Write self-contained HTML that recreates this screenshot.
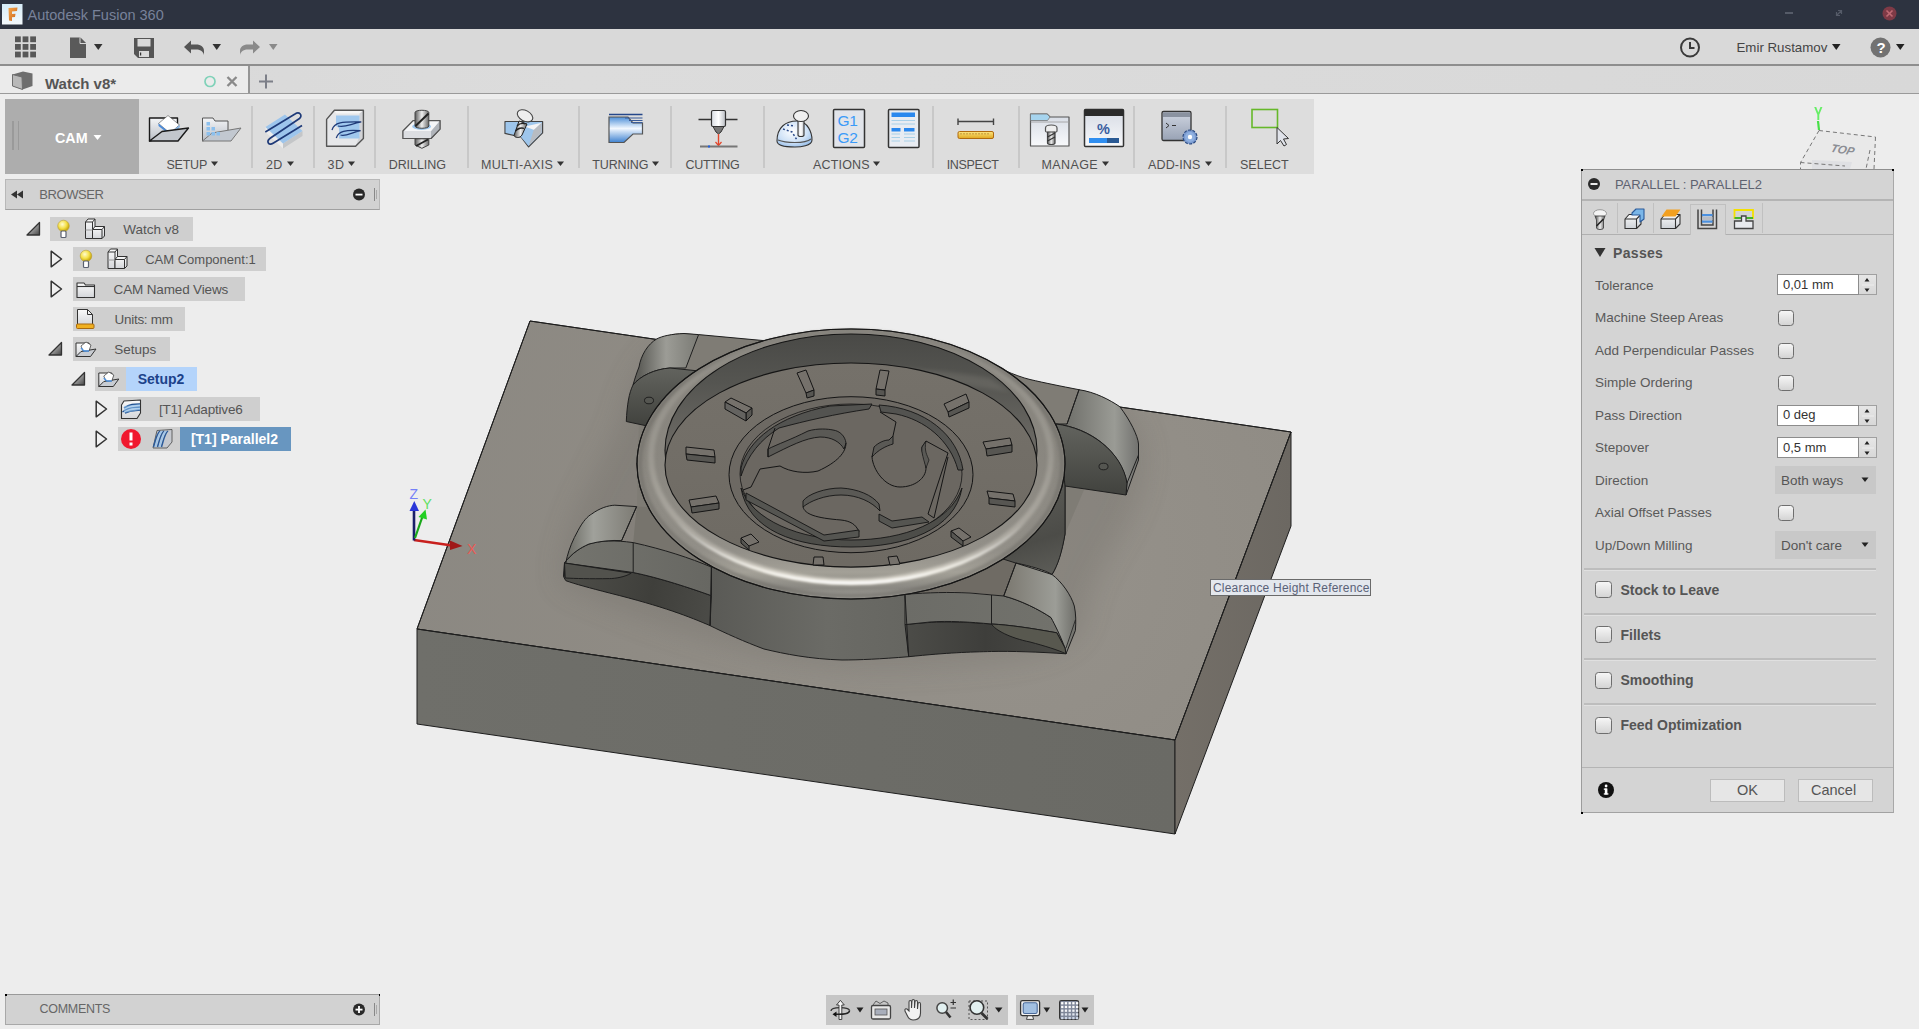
<!DOCTYPE html>
<html><head><meta charset="utf-8">
<style>
*{margin:0;padding:0;box-sizing:border-box}
html,body{width:1919px;height:1029px;overflow:hidden;background:#ededed;font-family:"Liberation Sans",sans-serif;color:#444}
.a{position:absolute}
.t{position:absolute;white-space:nowrap;line-height:1}
svg.a{overflow:visible}
</style></head><body>
<div class="a" style="left:0;top:0;width:1919px;height:29px;background:#2d3340"></div>
<svg class="a" style="left:2px;top:4px" width="21" height="21" viewBox="0 0 21 21">
<defs><linearGradient id="fi" x1="0" y1="0" x2="0" y2="1"><stop offset="0" stop-color="#d6ecf8"/><stop offset="1" stop-color="#f4f9fc"/></linearGradient>
<linearGradient id="fo" x1="0" y1="0" x2="1" y2="1"><stop offset="0" stop-color="#f6a64a"/><stop offset="1" stop-color="#c8641c"/></linearGradient></defs>
<rect x="0" y="0" width="20.5" height="20.5" fill="url(#fi)"/>
<path d="M6.5,4 L15.5,3.5 L15,7 L10,7.5 L10,10 L13.5,9.8 L13,13 L10,13.2 L10,17 L7,16.5 Z" fill="url(#fo)"/>
</svg>
<div class="t" style="left:27.5px;top:7.73px;font-size:14.5px;color:#78829a;font-weight:normal;">Autodesk Fusion 360</div>

<div class="a" style="left:1785px;top:12px;width:8px;height:1.5px;background:#555b68"></div>
<svg class="a" style="left:1834px;top:8px" width="10" height="10"><path d="M3,7 L7,3 M4,2.5 L7.5,2.5 L7.5,6 M2.5,4 L2.5,7.5 L6,7.5" stroke="#555b68" stroke-width="1.2" fill="none"/></svg>
<svg class="a" style="left:1882px;top:6px" width="15" height="15"><circle cx="7.5" cy="7.5" r="7" fill="#7e3a46"/><path d="M4.5,4.5 L10.5,10.5 M10.5,4.5 L4.5,10.5" stroke="#c06a74" stroke-width="1.6"/></svg>
<div class="a" style="left:0;top:29px;width:1919px;height:35px;background:#d9d9d9"></div>
<div class="a" style="left:0;top:64px;width:1919px;height:2px;background:#8e8e8e"></div>
<svg class="a" style="left:0;top:0" width="300" height="66"><rect x="15.0" y="36.4" width="5.8" height="5.8" fill="#585858"/><rect x="22.6" y="36.4" width="5.8" height="5.8" fill="#585858"/><rect x="30.2" y="36.4" width="5.8" height="5.8" fill="#585858"/><rect x="15.0" y="44.0" width="5.8" height="5.8" fill="#585858"/><rect x="22.6" y="44.0" width="5.8" height="5.8" fill="#585858"/><rect x="30.2" y="44.0" width="5.8" height="5.8" fill="#585858"/><rect x="15.0" y="51.6" width="5.8" height="5.8" fill="#585858"/><rect x="22.6" y="51.6" width="5.8" height="5.8" fill="#585858"/><rect x="30.2" y="51.6" width="5.8" height="5.8" fill="#585858"/><path d="M70,37.5 L80,37.5 L86,43.5 L86,58 L70,58 Z" fill="#5a5a5a"/><path d="M80,37.5 L80,43.5 L86,43.5" fill="#d9d9d9" stroke="#d9d9d9" stroke-width="1"/><path d="M80.5,37.5 L86,43 L80.5,43 Z" fill="#5a5a5a"/><path d="M94,44 L102.5,44 L98.25,50 Z" fill="#333"/><path d="M134,38 L154,38 L154,58 L138,58 L134,54 Z" fill="#555"/><rect x="137.5" y="39" width="13" height="7.5" fill="#d9d9d9"/><rect x="139" y="51" width="10" height="6" fill="#d9d9d9"/><rect x="140" y="52.5" width="1.2" height="3" fill="#333"/><path d="M184,47 L191,40.5 L191,44.5 L196,44.5 C201,44.5 204,47 204,51 L204,55 C203,51 200,49.5 196,49.5 L191,49.5 L191,53.5 Z" fill="#555"/><path d="M212.5,44 L221,44 L216.75,50 Z" fill="#333"/><path d="M260,47 L253,40.5 L253,44.5 L248,44.5 C243,44.5 240,47 240,51 L240,55 C241,51 244,49.5 248,49.5 L253,49.5 L253,53.5 Z" fill="#8a8a8a"/><path d="M269,44 L277.5,44 L273.25,50 Z" fill="#8a8a8a"/></svg>
<svg class="a" style="left:1676px;top:33px" width="30" height="30"><circle cx="14" cy="14.5" r="9" fill="none" stroke="#3a3a3a" stroke-width="2"/><path d="M14,9 L14,15 L18.5,15" fill="none" stroke="#3a3a3a" stroke-width="2"/></svg>
<div class="t" style="left:1736.5px;top:41.44px;font-size:13.3px;color:#444;font-weight:normal;">Emir Rustamov</div>

<svg class="a" style="left:1828px;top:40px" width="80" height="20"><path d="M4,4 L12.5,4 L8.25,10 Z" fill="#222"/><circle cx="52.5" cy="7.5" r="10" fill="#727272"/><path d="M68,4 L76.5,4 L72.25,10 Z" fill="#222"/></svg>
<div class="t" style="left:1876.5px;top:40.30px;font-size:15px;color:#fff;font-weight:bold;">?</div>

<div class="a" style="left:0;top:66px;width:1919px;height:27px;background:linear-gradient(90deg,#d8d8d8,#dcdcdc 30%,#d8d8d8)"></div>
<div class="a" style="left:0;top:66px;width:248px;height:27px;background:#ebebeb"></div>
<div class="a" style="left:248px;top:66px;width:2px;height:27px;background:#959595"></div>
<div class="a" style="left:0;top:93px;width:1919px;height:1px;background:#9a9a9a"></div>
<svg class="a" style="left:0;top:66px" width="300" height="27"><path d="M12.5,8.5 L23,5.5 L32.5,7.5 L32.5,20 L22.5,23.5 L12.5,20 Z" fill="#6e6e6e"/><path d="M12.5,8.5 L22,11 L22.5,23.5 L12.5,20 Z" fill="#b9b9b9" stroke="#6e6e6e" stroke-width="1"/><circle cx="210" cy="15.5" r="5" fill="none" stroke="#80d2b9" stroke-width="1.7"/><path d="M227.5,11 L236.5,20 M236.5,11 L227.5,20" stroke="#8a8a8a" stroke-width="2.4"/><path d="M259,15.5 L273,15.5 M266,8.5 L266,22.5" stroke="#7c7f88" stroke-width="2"/></svg>
<div class="t" style="left:45px;top:75.70px;font-size:15px;color:#555;font-weight:bold;">Watch v8*</div>

<div class="a" style="left:5px;top:99px;width:1309px;height:75px;background:#dddddd"></div>
<div class="a" style="left:5px;top:99px;width:134px;height:75px;background:#adadad"></div>
<div class="a" style="left:12px;top:121px;width:1.5px;height:29px;background:#9a9a9a"></div>
<div class="a" style="left:17.5px;top:121px;width:1.5px;height:29px;background:#9a9a9a"></div>
<div class="t" style="left:55px;top:130.90px;font-size:14.3px;color:#fff;font-weight:bold;">CAM</div>

<svg class="a" style="left:93px;top:134px" width="10" height="8"><path d="M0.5,1 L8.5,1 L4.5,6 Z" fill="#fff"/></svg>
<div class="a" style="left:251.4px;top:106px;width:2px;height:62px;background:#c8c8c8"></div>
<div class="a" style="left:312.6px;top:106px;width:2px;height:62px;background:#c8c8c8"></div>
<div class="a" style="left:373.5px;top:106px;width:2px;height:62px;background:#c8c8c8"></div>
<div class="a" style="left:466.5px;top:106px;width:2px;height:62px;background:#c8c8c8"></div>
<div class="a" style="left:577.7px;top:106px;width:2px;height:62px;background:#c8c8c8"></div>
<div class="a" style="left:670.4px;top:106px;width:2px;height:62px;background:#c8c8c8"></div>
<div class="a" style="left:762.7px;top:106px;width:2px;height:62px;background:#c8c8c8"></div>
<div class="a" style="left:931.6px;top:106px;width:2px;height:62px;background:#c8c8c8"></div>
<div class="a" style="left:1018.0px;top:106px;width:2px;height:62px;background:#c8c8c8"></div>
<div class="a" style="left:1133.0px;top:106px;width:2px;height:62px;background:#c8c8c8"></div>
<div class="a" style="left:1225.0px;top:106px;width:2px;height:62px;background:#c8c8c8"></div>
<div class="t" style="left:166.5px;top:159.42px;font-size:12.5px;color:#505050;font-weight:normal;letter-spacing:-0.24px">SETUP</div>

<svg class="a" style="left:211px;top:161px" width="9" height="7"><path d="M0,0.5 L7,0.5 L3.5,5 Z" fill="#333"/></svg>
<div class="t" style="left:266px;top:159.42px;font-size:12.5px;color:#505050;font-weight:normal;letter-spacing:0.38px">2D</div>

<svg class="a" style="left:287px;top:161px" width="9" height="7"><path d="M0,0.5 L7,0.5 L3.5,5 Z" fill="#333"/></svg>
<div class="t" style="left:327.4px;top:159.42px;font-size:12.5px;color:#505050;font-weight:normal;letter-spacing:0.60px">3D</div>

<svg class="a" style="left:348px;top:161px" width="9" height="7"><path d="M0,0.5 L7,0.5 L3.5,5 Z" fill="#333"/></svg>
<div class="t" style="left:388.7px;top:159.42px;font-size:12.5px;color:#505050;font-weight:normal;letter-spacing:-0.06px">DRILLING</div>

<div class="t" style="left:481px;top:159.42px;font-size:12.5px;color:#505050;font-weight:normal;letter-spacing:0.28px">MULTI-AXIS</div>

<svg class="a" style="left:557px;top:161px" width="9" height="7"><path d="M0,0.5 L7,0.5 L3.5,5 Z" fill="#333"/></svg>
<div class="t" style="left:592.2px;top:159.42px;font-size:12.5px;color:#505050;font-weight:normal;letter-spacing:-0.11px">TURNING</div>

<svg class="a" style="left:651.6px;top:161px" width="9" height="7"><path d="M0,0.5 L7,0.5 L3.5,5 Z" fill="#333"/></svg>
<div class="t" style="left:685.4px;top:159.42px;font-size:12.5px;color:#505050;font-weight:normal;letter-spacing:-0.20px">CUTTING</div>

<div class="t" style="left:813px;top:159.42px;font-size:12.5px;color:#505050;font-weight:normal;letter-spacing:0.17px">ACTIONS</div>

<svg class="a" style="left:873px;top:161px" width="9" height="7"><path d="M0,0.5 L7,0.5 L3.5,5 Z" fill="#333"/></svg>
<div class="t" style="left:946.7px;top:159.42px;font-size:12.5px;color:#505050;font-weight:normal;letter-spacing:-0.31px">INSPECT</div>

<div class="t" style="left:1041.5px;top:159.42px;font-size:12.5px;color:#505050;font-weight:normal;letter-spacing:0.38px">MANAGE</div>

<svg class="a" style="left:1102px;top:161px" width="9" height="7"><path d="M0,0.5 L7,0.5 L3.5,5 Z" fill="#333"/></svg>
<div class="t" style="left:1148px;top:159.42px;font-size:12.5px;color:#505050;font-weight:normal;letter-spacing:0.15px">ADD-INS</div>

<svg class="a" style="left:1204.7px;top:161px" width="9" height="7"><path d="M0,0.5 L7,0.5 L3.5,5 Z" fill="#333"/></svg>
<div class="t" style="left:1240px;top:159.42px;font-size:12.5px;color:#505050;font-weight:normal;letter-spacing:0.00px">SELECT</div>

<svg class="a" style="left:0;top:0" width="1320" height="180" viewBox="0 0 1320 180">
<defs>
 <linearGradient id="iw" x1="0" y1="0" x2="0" y2="1"><stop offset="0" stop-color="#ffffff"/><stop offset="1" stop-color="#c9cdd3"/></linearGradient>
 <linearGradient id="iwh" x1="0" y1="0" x2="1" y2="0"><stop offset="0" stop-color="#d8dce2"/><stop offset="0.5" stop-color="#ffffff"/><stop offset="1" stop-color="#b8bcc2"/></linearGradient>
 <linearGradient id="ib" x1="0" y1="0" x2="0" y2="1"><stop offset="0" stop-color="#cfe6fb"/><stop offset="1" stop-color="#6fa8e0"/></linearGradient>
 <linearGradient id="ibt" x1="0" y1="0" x2="0" y2="1"><stop offset="0" stop-color="#4d8fd8"/><stop offset="0.45" stop-color="#f2f8ff"/><stop offset="1" stop-color="#3f82d0"/></linearGradient>
 <linearGradient id="ifold" x1="0" y1="0" x2="0" y2="1"><stop offset="0" stop-color="#f4f5f7"/><stop offset="1" stop-color="#b9bec6"/></linearGradient>
 <linearGradient id="idrill" x1="0" y1="0" x2="1" y2="0"><stop offset="0" stop-color="#5a5a5a"/><stop offset="0.5" stop-color="#eeeeee"/><stop offset="1" stop-color="#6a6a6a"/></linearGradient>
 <linearGradient id="iyel" x1="0" y1="0" x2="0" y2="1"><stop offset="0" stop-color="#ffe680"/><stop offset="1" stop-color="#e0a820"/></linearGradient>
 <linearGradient id="iwin" x1="0" y1="0" x2="0" y2="1"><stop offset="0" stop-color="#d6dbe4"/><stop offset="1" stop-color="#f8f9fb"/></linearGradient>
 <linearGradient id="iadd" x1="0" y1="0" x2="0" y2="1"><stop offset="0" stop-color="#d0d6e2"/><stop offset="1" stop-color="#98a2b4"/></linearGradient>
 <radialGradient id="idome" cx="0.45" cy="0.4" r="0.7"><stop offset="0" stop-color="#ffffff"/><stop offset="0.6" stop-color="#cfe2f7"/><stop offset="1" stop-color="#8fb8e6"/></radialGradient>
</defs>
<!-- SETUP 1: open folder with white box -->
<g stroke-linejoin="round">
 <path d="M149.5,118 L177.5,118 L177.5,133 L149.5,141 Z" fill="url(#ifold)" stroke="#1a1a1a" stroke-width="1.4"/>
 <path d="M158.5,123.5 L168,115.5 L179.5,125 L170,133 Z" fill="#ffffff" stroke="#555" stroke-width="0.6"/>
 <path d="M158.5,123.5 L170,133 L170,135 L158.5,126 Z" fill="#4a8ad8"/>
 <path d="M170,133 L179.5,125 L180,127 L170,135 Z" fill="#8ab8e8"/>
 <path d="M162,131.5 L188.5,128 L178,141 L149.5,141 Z" fill="#c2c6cc" stroke="#1a1a1a" stroke-width="1.4"/>
</g>
<!-- SETUP 2: folder with grid -->
<g stroke="#555" stroke-width="1" stroke-linejoin="round">
 <path d="M202.5,118 L213,118 L215,121 L228,121 L228,134 L202.5,141 Z" fill="url(#ifold)"/>
 <path d="M212,133 L241,128 L231,141 L202.5,141 Z" fill="#c2c8d0" stroke="#777"/>
 <g fill="#8cc0ee" stroke="none"><rect x="206.5" y="122" width="3.5" height="3.5"/><rect x="206.5" y="127" width="3.5" height="3.5"/><rect x="211.5" y="127" width="3.5" height="3.5"/><rect x="206.5" y="132" width="3.5" height="3.5"/><rect x="211.5" y="132" width="3.5" height="3.5"/><rect x="216.5" y="132" width="3.5" height="3.5"/></g>
</g>
<!-- 2D: slanted plate with loops -->
<g>
 <path d="M265.5,127 L265.5,132 L283,148.5 L283,143.5 Z" fill="#ececec"/>
 <path d="M283,143.5 L302.5,131 L302.5,136 L283,148.5 Z" fill="#c4c6c8"/>
 <path d="M265.5,127 L285,114.5 L302.5,131 L283,143.5 Z" fill="#9dc5ec"/>
 <path d="M265.3,132 L295,114 C299.5,111 303,115.5 299.5,118.5 L270.5,138 C266,141 268,146.5 273.5,143 L302,125.5" fill="none" stroke="#1f3a78" stroke-width="1.7"/>
</g>
<!-- 3D: cube with curves -->
<g>
 <path d="M326.6,119.4 L334.4,110.3 L363.4,110.3 L363.4,138.5 L355.6,146.25 L326.6,146.25 Z" fill="#e6e7e9"/>
 <path d="M334.4,110.3 L363.4,110.3 L360.5,113.5 L336,113.5 Z" fill="#f6f6f6"/>
 <path d="M363.4,110.3 L363.4,138.5 L355.6,146.25 L359.5,136 L359.5,113.5 Z" fill="#d2d3d6"/>
 <path d="M336,115.5 L359.5,115.5 L359.5,138.5 L339,138.5 L339,128 L336,126 Z" fill="#a0c8ee"/>
 <path d="M326.6,119.4 L334.4,110.3 L363.4,110.3 L363.4,138.5 L355.6,146.25 L326.6,146.25 Z" fill="none" stroke="#555" stroke-width="1.4" stroke-linejoin="round"/>
 <path d="M332,130 C334,122 342,121.5 361.3,121.9 M338,126 C345,128 350,124 361.3,121.9 M336.3,138 C338,131 346,129.5 360.6,130.6 M340.5,135 C346,137 352,132 360.6,130.6" fill="none" stroke="#1f3a78" stroke-width="1.3"/>
</g>
<!-- DRILLING -->
<g stroke-linejoin="round">
 <path d="M403,131 L413.2,120.6 L440,120.6 L440,129.2 L431,138.5 L403,138.5 Z" fill="#e8e9ec" stroke="#555" stroke-width="1.1"/>
 <path d="M403,131 L431,131 L431,138.5 L403,138.5 Z" fill="#dcdee2"/>
 <path d="M431,131 L440,120.6 L440,129.2 L431,138.5 Z" fill="#b0b4ba"/>
 <path d="M403,131 L413.2,120.6 L440,120.6 L431,131 Z" fill="#f4f5f7"/>
 <path d="M403,131 L413.2,120.6 L440,120.6 L440,129.2 L431,138.5 L403,138.5 Z" fill="none" stroke="#555" stroke-width="1.1"/>
 <ellipse cx="421.6" cy="126.4" rx="9.5" ry="3.5" fill="#9cc6ee"/>
 <path d="M415,112.5 C415,109.5 428.8,109.5 428.8,112.5 L428.8,126 C428.8,129 415,129 415,126 Z" fill="url(#idrill)" stroke="#444" stroke-width="1"/>
 <path d="M415.5,126 L428.5,113.5" stroke="#222" stroke-width="2"/>
 <path d="M415,138.8 L428.8,138.8 L428.8,145 L421.9,148.3 L415,145 Z" fill="url(#idrill)" stroke="#444" stroke-width="1"/>
 <path d="M416,146 L428,139.5" stroke="#222" stroke-width="1.8"/>
</g>
<!-- MULTI-AXIS -->
<g stroke-linejoin="round">
 <path d="M505,121.5 L542.6,121.5 L542.6,132.9 L528.6,146.9 L521,137 L505,133.4 Z" fill="#9ec6ec" stroke="#444" stroke-width="1.2"/>
 <path d="M505.8,122.5 L516,122.5 L511,132.6 L505.8,132.6 Z" fill="#9ec6ec"/>
 <path d="M524.9,126.4 L533.7,130.1 L528.6,146 L520.5,136.5 Z" fill="#9ec6ec"/>
 <path d="M524.9,126.4 L541.7,122.7 L534.2,130.1 Z" fill="#f4f4f6"/>
 <path d="M541.7,122.7 L541.8,132.5 L528.8,145.5 L533.7,130.1 Z" fill="#b8bcc2"/>
 <path d="M519,121 L527,124 L522,135 C520,138.5 515,138 514,135.5 Z" fill="url(#idrill)" stroke="#222" stroke-width="1"/>
 <path d="M515.5,131 C518,128 522,127.5 524,128.5 M517,126 C519.5,123.5 523,123 525.5,124" fill="none" stroke="#222" stroke-width="1.3"/>
 <ellipse cx="525" cy="115.8" rx="8.3" ry="5.3" transform="rotate(28 525 115.8)" fill="#eeeeee" stroke="#444" stroke-width="1.1"/>
</g>
<!-- TURNING -->
<g>
 <path d="M609,117 L628,117 L633,123 L642.5,123 L642.5,134 L633,134 L624,142.5 L609,142.5 Z" fill="url(#ibt)" stroke="#555" stroke-width="1.2"/>
 <path d="M609,114.5 L642.5,114.5" stroke="#25478a" stroke-width="1.5"/>
 <path d="M625,118 L642.5,118 M629,120.5 L642.5,120.5 M631,122.5 L642.5,122.5" stroke="#3a5c9a" stroke-width="1.1"/>
</g>
<!-- CUTTING -->
<g>
 <path d="M698.5,119.5 L737.5,119.5" stroke="#333" stroke-width="1.3"/>
 <rect x="711.5" y="110.5" width="14" height="16" rx="1.5" fill="url(#iwh)" stroke="#333" stroke-width="1.2"/>
 <path d="M713,126.5 L724,126.5 L721,132 L718.5,134 L716,132 Z" fill="#777" stroke="#333" stroke-width="1"/>
 <path d="M718.5,134 L718.5,145" stroke="#e4452a" stroke-width="1.4"/>
 <path d="M715.5,142 L718.5,145.5 L721.5,142" fill="none" stroke="#e4452a" stroke-width="1.2"/>
 <path d="M700,146.5 L737.5,146.5" stroke="#777" stroke-width="2"/>
 <rect x="708" y="145.5" width="2" height="2" fill="#1f5fe0"/>
</g>
<!-- SIMULATE -->
<g stroke="#333" stroke-width="1.1">
 <path d="M777,141 C777,127 786,121 797,121 C808,121 812,133 812,140 C812,146 800,147 795,147 C785,147 777,146 777,141 Z" fill="url(#idome)"/>
 <path d="M778,140 C785,143 805,144 811,139" fill="none" stroke="#555"/>
 <path d="M783,129 L792,132 L797,140 M787,125 L795,126" fill="none" stroke="#2a4a8a" stroke-width="1.5" stroke-dasharray="2,2"/>
 <path d="M798,130 L798,121 L804,121 L804,135 C804,137 798,137 798,135 Z" fill="url(#iwh)"/>
 <ellipse cx="801" cy="116" rx="7.5" ry="5.5" fill="#f0f0f0"/>
</g>
<!-- G1G2 -->
<rect x="833.5" y="109.5" width="31" height="38" rx="1" fill="#e1e4ea" stroke="#333" stroke-width="1.5"/>
<text x="837.5" y="126.3" font-family="Liberation Sans" font-size="15.5" fill="#3a9af8" letter-spacing="-0.3">G1</text>
<text x="837.5" y="143.2" font-family="Liberation Sans" font-size="15.5" fill="#3a9af8" letter-spacing="-0.3">G2</text>
<!-- SETUP SHEET -->
<rect x="888.5" y="109.5" width="30.5" height="38" rx="1" fill="#e8ecf2" stroke="#333" stroke-width="1.5"/>
<rect x="891.5" y="112.5" width="23.5" height="4.5" fill="#2a88ee"/>
<path d="M891.5,120.5 L915,120.5 M891.5,124 L915,124 M891.5,134 L900,134 M904,134 L915,134 M891.5,137.5 L900,137.5 M904,137.5 L915,137.5 M891.5,141 L900,141 M904,141 L915,141" stroke="#a8d0e8" stroke-width="1.2"/>
<rect x="891.5" y="128" width="9" height="3.5" fill="#2a88ee"/><rect x="904" y="128" width="10.5" height="3.5" fill="#2a88ee"/>
<!-- INSPECT -->
<path d="M958,121.5 L993.5,121.5 M958,118.5 L958,125 M993.5,118.5 L993.5,125" stroke="#444" stroke-width="1.4"/>
<rect x="958" y="131.5" width="35.5" height="7" rx="1.5" fill="url(#iyel)" stroke="#b06a10" stroke-width="1"/>
<path d="M961,133 L961,134.5 M964,133 L964,134.5 M967,133 L967,134.5 M970,133 L970,134.5 M973,133 L973,134.5 M976,133 L976,134.5 M979,133 L979,134.5 M982,133 L982,134.5 M985,133 L985,134.5 M988,133 L988,134.5" stroke="#a07020" stroke-width="0.8"/>
<!-- TOOL LIBRARY -->
<g stroke="#555" stroke-width="1.2" stroke-linejoin="round">
 <path d="M1030.5,114 L1047,114 L1050,117 L1069,117 L1069,146 L1030.5,146 Z" fill="url(#iwin)"/>
 <path d="M1030.5,114 L1047,114 L1050,117 L1047.5,120.5 L1030.5,120.5 Z" fill="#a6d4ee" stroke="#777" stroke-width="0.8"/>
 <path d="M1030.5,122 L1069,122" stroke="#999" stroke-width="0.8"/>
 <path d="M1045.5,128 C1045.5,124 1057,124 1057,128 L1057,131 C1057,133 1045.5,133 1045.5,131 Z" fill="#eee" stroke="#555"/>
 <path d="M1047.5,132 L1055,132 L1055,143 C1055,145 1047.5,145 1047.5,143 Z" fill="url(#idrill)" stroke="#444"/>
 <path d="M1047.5,137 L1055,133 M1047.5,141 L1055,137" stroke="#333" stroke-width="1.3"/>
</g>
<!-- POST PROCESS -->
<rect x="1084.5" y="109.5" width="39" height="37" rx="1" fill="url(#iwin)" stroke="#333" stroke-width="1.5"/>
<rect x="1084.5" y="109.5" width="39" height="6.5" fill="#2a2a2a"/>
<rect x="1089" y="138" width="18" height="5" fill="#2f8ef0"/><rect x="1107" y="138" width="12" height="5" fill="#2a5a94"/>
<text x="1097" y="134" font-family="Liberation Sans" font-size="14.5" font-weight="bold" fill="#3a5ea0">%</text>
<!-- ADD-INS -->
<g stroke="#333" stroke-width="1.3">
 <rect x="1162" y="111.5" width="29" height="29" rx="1.5" fill="url(#iadd)"/>
 <rect x="1163" y="112.5" width="27" height="4.5" fill="#8a92a0" stroke="none"/>
 <path d="M1166,123 L1169,125.5 L1166,128 M1172,125.5 L1176,125.5" fill="none" stroke="#333" stroke-width="1"/>
 <circle cx="1190" cy="137" r="7" fill="#7a9ad0" stroke="#2a4a80" stroke-width="1.2" stroke-dasharray="3,1.4"/>
 <circle cx="1190" cy="137" r="5" fill="#8fb0e0" stroke="none"/>
 <circle cx="1190" cy="137" r="2.2" fill="#fff" stroke="none"/>
</g>
<!-- SELECT -->
<rect x="1252" y="109.5" width="25.5" height="18" fill="none" stroke="#66b82a" stroke-width="1.6"/>
<path d="M1277,127.5 L1277,144 L1280.5,140.5 L1284,146 L1286.5,144.5 L1283.5,139 L1288.5,138.5 Z" fill="#e0e3ea" stroke="#333" stroke-width="1"/>
</svg>

<div class="a" style="left:5px;top:179px;width:375px;height:31px;background:#d2d2d2;border:1px solid #b8b8b8;border-bottom:1px solid #a0a0a0"></div>
<svg class="a" style="left:10px;top:190px" width="16" height="10"><path d="M1,4.5 L7,0.5 L7,8.5 Z M7,4.5 L13,0.5 L13,8.5 Z" fill="#333"/></svg>
<div class="t" style="left:39.2px;top:188.00px;font-size:13px;color:#666;font-weight:normal;letter-spacing:-0.4px">BROWSER</div>

<svg class="a" style="left:352px;top:187px" width="26" height="16"><circle cx="7" cy="7.5" r="6" fill="#2a2a2a"/><rect x="3.5" y="6.7" width="7" height="1.8" fill="#fff"/><rect x="22" y="1" width="1" height="13" fill="#888"/><rect x="24" y="3" width="1" height="9" fill="#aaa"/></svg>
<div class="a" style="left:50px;top:217px;width:143px;height:24px;background:#cfcfcf"></div>
<svg class="a" style="left:25.5px;top:221px" width="16" height="16"><defs><linearGradient id="td25.5221" x1="0" y1="0" x2="1" y2="1"><stop offset="0" stop-color="#eee"/><stop offset="1" stop-color="#444"/></linearGradient></defs><path d="M1,14 L13.5,1.5 L13.5,14 Z" fill="url(#td25.5221)" stroke="#333" stroke-width="1.3" stroke-linejoin="round"/></svg>
<div class="t" style="left:123.2px;top:222.57px;font-size:13.5px;color:#555;font-weight:normal;">Watch v8</div>

<div class="a" style="left:72.6px;top:247px;width:193px;height:24px;background:#cfcfcf"></div>
<svg class="a" style="left:49.5px;top:250px" width="14" height="19"><path d="M1.2,1.2 L11.5,9 L1.2,16.8 Z" fill="#f0f0f0" stroke="#333" stroke-width="1.5" stroke-linejoin="round"/></svg>
<div class="t" style="left:145.2px;top:253.00px;font-size:13px;color:#555;font-weight:normal;">CAM Component:1</div>

<div class="a" style="left:72.6px;top:277px;width:172px;height:24px;background:#cfcfcf"></div>
<svg class="a" style="left:49.5px;top:280px" width="14" height="19"><path d="M1.2,1.2 L11.5,9 L1.2,16.8 Z" fill="#f0f0f0" stroke="#333" stroke-width="1.5" stroke-linejoin="round"/></svg>
<div class="t" style="left:113.6px;top:282.57px;font-size:13.5px;color:#555;font-weight:normal;letter-spacing:-0.15px">CAM Named Views</div>

<div class="a" style="left:72.6px;top:307px;width:112px;height:24px;background:#cfcfcf"></div>
<div class="t" style="left:114.6px;top:312.57px;font-size:13.5px;color:#555;font-weight:normal;letter-spacing:-0.3px">Units: mm</div>

<div class="a" style="left:72.6px;top:337px;width:97px;height:24px;background:#cfcfcf"></div>
<svg class="a" style="left:48px;top:341px" width="16" height="16"><defs><linearGradient id="td48341" x1="0" y1="0" x2="1" y2="1"><stop offset="0" stop-color="#eee"/><stop offset="1" stop-color="#444"/></linearGradient></defs><path d="M1,14 L13.5,1.5 L13.5,14 Z" fill="url(#td48341)" stroke="#333" stroke-width="1.3" stroke-linejoin="round"/></svg>
<div class="t" style="left:114.3px;top:342.57px;font-size:13.5px;color:#555;font-weight:normal;">Setups</div>

<div class="a" style="left:95.2px;top:367px;width:102px;height:24px;background:#cfcfcf"></div>
<div class="a" style="left:126.3px;top:367px;width:70.8px;height:24px;background:#b4d4fb"></div>
<svg class="a" style="left:70.5px;top:371px" width="16" height="16"><defs><linearGradient id="td70.5371" x1="0" y1="0" x2="1" y2="1"><stop offset="0" stop-color="#eee"/><stop offset="1" stop-color="#444"/></linearGradient></defs><path d="M1,14 L13.5,1.5 L13.5,14 Z" fill="url(#td70.5371)" stroke="#333" stroke-width="1.3" stroke-linejoin="round"/></svg>
<div class="t" style="left:137.7px;top:372.15px;font-size:14px;color:#1c428a;font-weight:bold;">Setup2</div>

<div class="a" style="left:117.8px;top:397px;width:142px;height:24px;background:#cfcfcf"></div>
<svg class="a" style="left:94.5px;top:400px" width="14" height="19"><path d="M1.2,1.2 L11.5,9 L1.2,16.8 Z" fill="#f0f0f0" stroke="#333" stroke-width="1.5" stroke-linejoin="round"/></svg>
<div class="t" style="left:159px;top:402.57px;font-size:13.5px;color:#555;font-weight:normal;letter-spacing:-0.2px">[T1] Adaptive6</div>

<div class="a" style="left:117.8px;top:427px;width:173.4px;height:24px;background:#cfcfcf"></div>
<div class="a" style="left:179.8px;top:427px;width:111.4px;height:24px;background:#6896c0"></div>
<svg class="a" style="left:94.5px;top:430px" width="14" height="19"><path d="M1.2,1.2 L11.5,9 L1.2,16.8 Z" fill="#f0f0f0" stroke="#333" stroke-width="1.5" stroke-linejoin="round"/></svg>
<div class="t" style="left:190.9px;top:432.35px;font-size:14px;color:#fff;font-weight:bold;">[T1] Parallel2</div>

<svg class="a" style="left:120px;top:428px" width="22" height="22"><circle cx="11" cy="11" r="10" fill="#f0182e"/><rect x="9.5" y="4.5" width="3" height="8" fill="#fff"/><rect x="9.5" y="14.5" width="3" height="3" fill="#fff"/></svg>
<!--TREEICONS-->
<div class="a" style="left:5px;top:994px;width:375px;height:31px;background:#d2d2d2;border:1px solid #a8a8a8;border-top:1px solid #9a9a9a"></div>
<div class="a" style="left:5px;top:994px;width:1.5px;height:1.5px;background:#000"></div>
<div class="a" style="left:378.5px;top:994px;width:1.5px;height:1.5px;background:#000"></div>
<div class="t" style="left:39.6px;top:1003.12px;font-size:12.5px;color:#666;font-weight:normal;letter-spacing:-0.3px">COMMENTS</div>

<svg class="a" style="left:352px;top:1002px" width="26" height="16"><circle cx="7" cy="7.5" r="6" fill="#2a2a2a"/><rect x="3.5" y="6.7" width="7" height="1.8" fill="#fff"/><rect x="6.1" y="4" width="1.8" height="7" fill="#fff"/><rect x="22" y="1" width="1" height="13" fill="#888"/><rect x="24" y="3" width="1" height="9" fill="#aaa"/></svg>
<svg class="a" style="left:0;top:0" width="1919" height="1029" viewBox="0 0 1919 1029">
<defs>
 <radialGradient id="gTop" cx="1000" cy="560" r="620" gradientUnits="userSpaceOnUse">
  <stop offset="0" stop-color="#96928b"/><stop offset="0.6" stop-color="#8f8b84"/><stop offset="1" stop-color="#8b8882"/>
 </radialGradient>
 <linearGradient id="gFront" x1="417" y1="0" x2="1175" y2="0" gradientUnits="userSpaceOnUse">
  <stop offset="0" stop-color="#6f6f6a"/><stop offset="1" stop-color="#6a6a65"/>
 </linearGradient>
 <linearGradient id="gRight" x1="1175" y1="0" x2="1291" y2="0" gradientUnits="userSpaceOnUse">
  <stop offset="0" stop-color="#746f68"/><stop offset="1" stop-color="#6c6862"/>
 </linearGradient>
 <linearGradient id="gWall" x1="711" y1="0" x2="905" y2="0" gradientUnits="userSpaceOnUse">
  <stop offset="0" stop-color="#5a5a56"/><stop offset="0.6" stop-color="#6b6b66"/><stop offset="1" stop-color="#666661"/>
 </linearGradient>
 <linearGradient id="gRing" x1="0" y1="329" x2="0" y2="599" gradientUnits="userSpaceOnUse">
  <stop offset="0" stop-color="#a9a69f"/><stop offset="0.5" stop-color="#9a978f"/><stop offset="0.8" stop-color="#a9a59c"/><stop offset="0.91" stop-color="#d9d5cc"/><stop offset="0.97" stop-color="#a09d96"/><stop offset="1" stop-color="#7a7872"/>
 </linearGradient>
 <linearGradient id="gBezel" x1="0" y1="337" x2="0" y2="567" gradientUnits="userSpaceOnUse">
  <stop offset="0" stop-color="#4a4a47"/><stop offset="0.2" stop-color="#555551"/><stop offset="0.45" stop-color="#6a6863"/><stop offset="1" stop-color="#7a766f"/>
 </linearGradient>
 <linearGradient id="gDial" x1="0" y1="363" x2="0" y2="564" gradientUnits="userSpaceOnUse">
  <stop offset="0" stop-color="#75716a"/><stop offset="1" stop-color="#6e6a63"/>
 </linearGradient>
 <linearGradient id="gLugTL" x1="640" y1="0" x2="698" y2="0" gradientUnits="userSpaceOnUse">
  <stop offset="0" stop-color="#5f5f5a"/><stop offset="0.45" stop-color="#9c9c96"/><stop offset="1" stop-color="#7b7b75"/>
 </linearGradient>
 <linearGradient id="gLugTR" x1="1060" y1="0" x2="1138" y2="0" gradientUnits="userSpaceOnUse">
  <stop offset="0" stop-color="#6a6a65"/><stop offset="0.7" stop-color="#9a9b95"/><stop offset="1" stop-color="#737370"/>
 </linearGradient>
 <linearGradient id="gLugBL" x1="565" y1="0" x2="636" y2="0" gradientUnits="userSpaceOnUse">
  <stop offset="0" stop-color="#66665f"/><stop offset="0.4" stop-color="#a0a19b"/><stop offset="1" stop-color="#7d7b74"/>
 </linearGradient>
 <linearGradient id="gLugBR" x1="1003" y1="0" x2="1076" y2="0" gradientUnits="userSpaceOnUse">
  <stop offset="0" stop-color="#7a776f"/><stop offset="0.72" stop-color="#9c9d97"/><stop offset="1" stop-color="#6e6e69"/>
 </linearGradient>
 <linearGradient id="gLugDark" x1="0" y1="0" x2="0" y2="1">
  <stop offset="0" stop-color="#62635e"/><stop offset="0.5" stop-color="#52534e"/><stop offset="1" stop-color="#41423e"/>
 </linearGradient>

 <linearGradient id="gRing2" x1="0" y1="329" x2="0" y2="599" gradientUnits="userSpaceOnUse">
  <stop offset="0" stop-color="#85827b"/><stop offset="0.5" stop-color="#8a8780"/><stop offset="0.82" stop-color="#928f88"/><stop offset="0.9" stop-color="#a3a097"/><stop offset="0.96" stop-color="#8a8882"/><stop offset="1" stop-color="#a09e98"/>
 </linearGradient>
 <linearGradient id="gHi" x1="0" y1="332" x2="0" y2="582" gradientUnits="userSpaceOnUse">
  <stop offset="0" stop-color="#a8a59e" stop-opacity="0.3"/><stop offset="0.5" stop-color="#b0ada5" stop-opacity="0.45"/><stop offset="0.85" stop-color="#c4c0b7" stop-opacity="0.6"/><stop offset="1" stop-color="#e8e4da" stop-opacity="0.9"/>
 </linearGradient>
 <filter id="blur3" x="-10%" y="-10%" width="120%" height="120%"><feGaussianBlur stdDeviation="2.2"/></filter>
 <filter id="blur2" x="-10%" y="-10%" width="120%" height="120%"><feGaussianBlur stdDeviation="1.6"/></filter>
 <filter id="blur1" x="-10%" y="-10%" width="120%" height="120%"><feGaussianBlur stdDeviation="0.9"/></filter>
 <linearGradient id="gHi2" x1="0" y1="335" x2="0" y2="583" gradientUnits="userSpaceOnUse"><stop offset="0" stop-color="#fff" stop-opacity="0"/><stop offset="0.75" stop-color="#fff" stop-opacity="0"/><stop offset="0.95" stop-color="#fffdf6" stop-opacity="0.8"/><stop offset="1" stop-color="#ffffff" stop-opacity="1"/></linearGradient>

 <linearGradient id="gWallR" x1="1030" y1="480" x2="1060" y2="575" gradientUnits="userSpaceOnUse"><stop offset="0" stop-color="#5c5c57"/><stop offset="0.6" stop-color="#4c4c48"/><stop offset="1" stop-color="#5e5e59"/></linearGradient>
 <linearGradient id="gBandLo" x1="565" y1="570" x2="710" y2="600" gradientUnits="userSpaceOnUse"><stop offset="0" stop-color="#4e4e49"/><stop offset="0.6" stop-color="#3f3f3b"/><stop offset="1" stop-color="#4a4a46"/></linearGradient>
 <linearGradient id="gBandUp" x1="565" y1="0" x2="711" y2="0" gradientUnits="userSpaceOnUse"><stop offset="0" stop-color="#74746e"/><stop offset="1" stop-color="#676762"/></linearGradient>
 <linearGradient id="gBandLoR" x1="905" y1="0" x2="1066" y2="0" gradientUnits="userSpaceOnUse"><stop offset="0" stop-color="#4c4c48"/><stop offset="0.5" stop-color="#3e3e3b"/><stop offset="1" stop-color="#4a4a46"/></linearGradient>
 <linearGradient id="gBandUpR" x1="905" y1="0" x2="1066" y2="0" gradientUnits="userSpaceOnUse"><stop offset="0" stop-color="#6c6c67"/><stop offset="1" stop-color="#72726c"/></linearGradient>
 <clipPath id="clipTop"><path d="M530,321 L1291,432 L1175,740 L417,629 Z"/></clipPath>
 <filter id="blur12" x="-30%" y="-30%" width="160%" height="160%"><feGaussianBlur stdDeviation="14"/></filter>
</defs>
<g stroke="#1e1e1e" stroke-width="1" stroke-linejoin="round">
 <!-- block -->
 <path d="M530,321 L1291,432 L1175,740 L417,629 Z" fill="url(#gTop)"/>
 <path d="M417,629 L1175,740 L1175,834 L417,724 Z" fill="url(#gFront)"/>
 <path d="M1291,432 L1291,526 L1175,834 L1175,740 Z" fill="url(#gRight)"/>
</g>
<g clip-path="url(#clipTop)">
 <path d="M560,585 C560,520 600,470 620,420 C630,370 660,330 700,332 L1000,360 C1080,380 1140,400 1145,450 C1150,520 1090,560 1085,620 C1080,660 1000,665 900,670 C800,672 700,640 620,610 Z" fill="#5f5c56" opacity="0.22" filter="url(#blur12)"/>
</g>
<path d="M530,321 L1291,432 L1175,740 L417,629 Z" fill="none" stroke="#1e1e1e" stroke-width="1"/>
<g stroke="#1e1e1e" stroke-width="1" stroke-linejoin="round" fill="none">
 <!-- case top surface silhouette (upper) -->
 <path d="M640,368 C642,345 662,333 684,333 L698.6,334.6 L765,340.5 L851,330 L983,362 C1000,368 1015,376 1030,379.5 C1045,383 1060,386 1079,389.7 C1095,392 1110,400 1119.8,406.7 L1065,534 L637,506 Z" fill="#7f7c75" stroke="none"/>
 <path d="M698.6,334.6 L768,341"/>
 <path d="M975,358 C995,366 1015,376 1030,379.5 C1045,383 1060,386 1079,389.7" fill="none"/>
 <!-- case wall (cylinder) front -->
 <path d="M637,463 A214,134 0 0 0 1065,463 L1065,534 C1062,550 1058,565 1052,574.5 L1003,559 L905,594.3 L908.7,656.7 C880,659 860,660 842,660 C810,659 785,654 764,649 C745,642 725,633 710,625.6 L711.4,567.1 Z" fill="url(#gWall)"/>
 <path d="M1065,480 L1065,534 C1062,552 1058,565 1052,574.5 L1003,559 L990,540 Z" fill="url(#gWallR)" stroke="none"/>
 <path d="M1065,486 L1065,534 C1062,552 1058,565 1052,574.5" fill="none"/>
 <!-- top-left lug -->
 <path d="M656.6,339 C662,336 672,334 684,333.5 L698.6,334.6 L685.8,368 L670,368 C655,369 640,376 633,385 C635,378 637,372 639,367 C641,355 648,344 656.6,339 Z" fill="url(#gLugTL)"/>
 <path d="M626.3,421.5 C627,405 629,393 633,385 C640,376 655,369 670,368 L696,370.7 L720,372 L700,420 L645,425.5 Z" fill="url(#gLugDark)"/>
 <ellipse cx="649" cy="400.5" rx="4.5" ry="3.3" fill="#555651" stroke="#1a1a1a" stroke-width="0.9"/>
 <!-- top-right lug -->
 <path d="M1079,389.7 C1095,392 1110,400 1119.8,406.7 C1130,420 1138,436 1138.5,444 L1138.5,460 L1126,495 L1127,483 C1120,450 1090,428 1056,424 L1067,424 Z" fill="url(#gLugTR)"/>
 <path d="M1056,424 C1090,428 1122,452 1127,483 L1126,495 L1065,486 L1060,440 Z" fill="url(#gLugDark)"/>
 <path d="M1079,389.7 L1067,424"/>
 <path d="M1138.5,455 L1127,483"/>
 <ellipse cx="1103.5" cy="466.5" rx="4.5" ry="3.3" fill="#555651" stroke="#1a1a1a" stroke-width="0.9"/>
 <!-- bottom-left lug -->
 <path d="M633.2,542.6 L636.6,506.6 L660,507 L720,560 L711.4,567.1 C690,558 663.8,549.4 633.2,542.6 Z" fill="#77746d" stroke="none"/>
 <path d="M564.5,563 L633.2,572.5 C660,578 690,588 711.4,595.7 L710,625.6 C690,617 663.8,606.5 609.4,593 C590,588 575,584 565.9,580.7 C564,578 563.8,577 563.8,576.6 Z" fill="url(#gBandLo)"/>
 <path d="M564.5,563 C572,553 580,548 589,544 C600,540.5 615,540 633.2,542.6 C663.8,549.4 690,558 711.4,567.1 L711.4,595.7 C690,588 660,578 633.2,572.5 Z" fill="url(#gBandUp)"/>
 <path d="M563.8,576.6 C565,565 567,550 578.1,530.4 C583,521 588,516 591.7,514 C600,508 608,505.5 614.8,505.2 L636.6,506.6 L621.6,540.6 C612,540 600,541 589,544 C580,548 572,553 564.5,563 Z" fill="url(#gLugBL)"/>
 <path d="M564.5,563 L631.2,573.2 C625,577 615,578.6 609.4,578.6 C590,579 575,578.5 565.2,578 Z" fill="#52524d"/>
 <path d="M636.6,506.6 L621.6,540.6"/>
 <path d="M633.2,542.6 L633.2,572.5"/>
 <!-- bottom-right lug -->
 <path d="M880,600 L880,570 L1003,559 L1016,563 L1003.7,596 C990,594.5 960,591 948,592 C930,592.5 915,594 905,594.3 Z" fill="#6f6b64" stroke="none"/>
 <path d="M905,624.6 C930,622 948,620.6 991.5,624 C1010,625 1030,628 1056.8,632.8 L1065,648 L1066,653.8 C1040,652 1010,651 991.5,651.5 C970,652 948,652.6 908.7,656.7 Z" fill="url(#gBandLoR)"/>
 <path d="M905,594.3 C930,592.5 948,592 970,593 L1003.7,596 C1020,600 1040,610 1051,617.6 C1057,625 1062,640 1065,648 L1056.8,632.8 C1030,628 1010,625 991.5,624 C970,622 948,620.6 930,622 L905,624.6 Z" fill="url(#gBandUpR)"/>
 <path d="M1016,563 C1030,566 1045,570 1052,574.5 C1062,582 1071,595 1074.3,606 C1076,614 1076,622 1075.4,630.5 L1066,653.8 L1065,648 C1060,635 1055,625 1051,617.6 C1040,610 1020,600 1003.7,596 Z" fill="url(#gLugBR)"/>
 <path d="M991.5,624 C995,630 1010,638 1030,642 C1045,646 1058,650 1066,653.8 L1065,648 L1056.8,632.8 C1030,628 1010,625 991.5,624 Z" fill="#58584f"/>
 <path d="M1003,559 L1052,574.5" fill="none"/>
 <path d="M1016,563 L1003.7,596"/>
 <path d="M991.5,595 L991.5,624"/>
 <path d="M905,594.3 L908.7,656.7"/>
 <path d="M711.4,567.1 L710,625.6"/>
 <path d="M1075.4,620 L1066,648" stroke-width="0.8"/>
</g>
<g id="ring" stroke="#151515" stroke-width="1.1">
 <ellipse cx="851" cy="464" rx="214" ry="135" fill="url(#gRing2)"/>
 <ellipse cx="851" cy="464" rx="211" ry="132" fill="none" stroke="#6e6c66" stroke-width="4" opacity="0.6" filter="url(#blur2)"/>
 <ellipse cx="851" cy="457" rx="200" ry="125" fill="none" stroke="url(#gHi)" stroke-width="6" filter="url(#blur2)"/>
 <ellipse cx="851" cy="459" rx="202" ry="124" fill="none" stroke="url(#gHi2)" stroke-width="2.5" filter="url(#blur1)"/>
 <ellipse cx="851" cy="464" rx="214" ry="135" fill="none"/>
 <ellipse cx="851" cy="450.5" rx="186" ry="116.5" fill="url(#gBezel)"/>
 <path d="M690,420 C740,372 860,356 990,378 L1010,392 C880,368 760,378 700,432 Z" fill="#9a968e" opacity="0.22" stroke="none" filter="url(#blur3)"/>
 <ellipse cx="851" cy="465" rx="186" ry="102" fill="url(#gDial)"/>
</g>
<g id="dial" stroke="#151515" stroke-width="1" stroke-linejoin="round">
 <!-- markers -->
 <g fill="#75716b">
  <path d="M797,373 L806,370 L814,390 L806,393 Z"/><path d="M806,393 L814,390 L814,396 L807,398 Z" fill="#575652"/>
  <path d="M880,370 L889,371 L885,390 L876,389 Z"/><path d="M876,389 L885,390 L885,396 L876,395 Z" fill="#575652"/>
  <path d="M944,404 L966,394 L969,402 L948,412 Z"/><path d="M948,412 L969,402 L969,408 L949,417 Z" fill="#575652"/>
  <path d="M983,442 L1010,438 L1012,445 L986,449 Z"/><path d="M986,449 L1012,445 L1012,452 L987,456 Z" fill="#575652"/>
  <path d="M987,491 L1013,494 L1015,501 L989,498 Z"/><path d="M989,498 L1015,501 L1015,507 L989,504 Z" fill="#575652"/>
  <path d="M951,531 L959,528 L971,537 L963,541 Z"/><path d="M951,531 L963,541 L963,546 L951,537 Z" fill="#575652"/>
  <path d="M888,557 L897,556 L900,564 L890,565 Z"/>
  <path d="M814,557 L823,557 L824,565 L813,565 Z"/>
  <path d="M741,538 L751,534 L759,542 L749,546 Z"/><path d="M741,538 L749,546 L749,550 L741,543 Z" fill="#575652"/>
  <path d="M689,500 L716,496 L719,503 L691,507 Z"/><path d="M691,507 L719,503 L719,509 L692,513 Z" fill="#575652"/>
  <path d="M686,447 L714,450 L715,457 L686,454 Z"/><path d="M686,454 L715,457 L715,463 L687,460 Z" fill="#575652"/>
  <path d="M725,402 L731,398 L752,408 L746,413 Z"/><path d="M746,413 L752,408 L752,415 L746,421 Z" fill="#575652"/><path d="M725,402 L746,413 L746,421 L725,409 Z" fill="#646360"/>
 </g>
 <!-- chapter ring -->
 <ellipse cx="851" cy="474.7" rx="122" ry="78" fill="#6d6963"/>
 <ellipse cx="851" cy="474" rx="111" ry="70" fill="#6b6761" stroke-width="0.8"/>
 <!-- bottom groove wall -->
 <path d="M741,488 C752,520 800,540 851,540 C905,540 950,522 962,488 C955,530 905,547 851,547 C795,547 748,530 741,488 Z" fill="#4d4d49" stroke-width="0.9"/>
 <!-- top-left slot wall -->
 <path d="M741,468 C748,440 778,416 830,406 L872,404 L869,409 C835,414 805,421 779,428 C760,440 748,455 741,476 Z" fill="#535350" stroke-width="0.9"/>
 <!-- top-right slot wall -->
 <path d="M879,405 C925,408 958,435 963,470 L958,470 C950,440 925,420 896,414 L881,412 Z" fill="#535350" stroke-width="0.9"/>
 <!-- left "2" -->
 <path d="M768,449 C778,444 790,440 808,431 C818,428 828,429 833,430 C840,431 845,436 846,443 L844,449 C840,442 832,437 820,437 C805,438 790,446 768,457 Z" fill="#5a5955" stroke-width="0.9"/>
 <path d="M775,428 L768,449 L768,457 M846,443 C846,452 838,462 818,471 C805,474 790,472 780,466 L760,469 L751,487 L743,490" fill="none"/>
 <!-- bottom "S" -->
 <path d="M803,501 C808,494 825,488 841,488 C858,489 872,495 879,504 L880,511 C872,502 858,495 841,495 C825,495 810,501 803,507 Z" fill="#5a5955" stroke-width="0.9"/>
 <path d="M803,507 C805,514 815,518 841,520 C850,521 856,524 859,532" fill="none"/>
 <path d="M746,493 L824,535 L859,530 L859,537 L824,541 L746,500 Z" fill="#555551" stroke-width="0.9"/>
 <path d="M879,514 L892,521 L922,517 L929,522 L892,528 L879,521 Z" fill="#555551" stroke-width="0.9"/>
 <!-- right "5" -->
 <path d="M880,412 L896,422 L893,436 L888,441 C880,444 874,448 872,457 C873,470 885,487 900,487 C915,487 926,478 926,468 C925,458 921,452 922,447 L926,441 L948,453 L928,514 L934,518 L948,457" fill="none"/>
 <path d="M874,447 C878,443 884,440 889,440 L893,436 L893,444 C886,446 878,450 872,457 Z" fill="#5a5955" stroke-width="0.9"/>
 <path d="M922,447 C921,452 924,460 926,468 L929,460 C927,455 924,451 926,441 Z" fill="#5a5955" stroke-width="0.7"/>
</g>
<!-- axis triad -->
<g>
 <path d="M414,540 L452,545.5" stroke="#c8201e" stroke-width="2.6"/>
 <path d="M450,540.5 L462.5,546 L450,550 Z" fill="#a01818"/>
 <path d="M414,540.5 L414,508" stroke="#1a1f6a" stroke-width="2.6"/>
 <path d="M409.5,511 L414.3,501 L419,511 Z" fill="#2a36d8"/>
 <path d="M415,538 L423,515" stroke="#1aa81a" stroke-width="2.2"/>
 <path d="M418.5,517 L425.5,509.5 L427,519.5 Z" fill="#22d022"/>
 <text x="409.5" y="499" font-family="Liberation Sans" font-size="14" fill="#7480f8">Z</text>
 <text x="422.5" y="509" font-family="Liberation Sans" font-size="14" fill="#60e060">Y</text>
 <text x="467" y="553.5" font-family="Liberation Sans" font-size="14" fill="#e85a55">X</text>
</g>
</svg>

<div class="a" style="left:1209.5px;top:579.3px;width:161px;height:16.3px;background:#e3e7ed;border:1px solid #6a6a6a"></div>
<div class="t" style="left:1213px;top:582.34px;font-size:12px;color:#5a6278;font-weight:normal;letter-spacing:0.2px">Clearance Height Reference</div>

<svg class="a" style="left:1790px;top:100px" width="100" height="70">
<path d="M29,30.5 L85.5,37 L84,69 L10,69 L10.5,62.5 Z" fill="#e9e9e9"/>
<path d="M22,60 L62,62 L60,69 L22,69 Z" fill="#dfe0e3"/>
<path d="M29,30.5 L85.5,37 M85.5,37 L84,69 M29,30.5 L10.5,62.5 L10.5,69 M10.5,62.5 L55,66 M80,50 L76,69" fill="none" stroke="#777" stroke-width="1" stroke-dasharray="4,3"/>
<path d="M29,30 L28,21" stroke="#47e047" stroke-width="2.2"/>
<text x="0" y="0" font-family="Liberation Sans" font-size="11.5" font-style="italic" font-weight="bold" fill="#8c8e94" text-anchor="middle" transform="translate(51.5 53.5) rotate(9) skewX(-8)">TOP</text>
</svg>
<div class="t" style="left:1813.5px;top:103.92px;font-size:19px;color:#66ee66;font-weight:bold;transform:scaleX(0.68);transform-origin:0 0">Y</div>

<div class="a" style="left:1581px;top:169px;width:313px;height:644px;background:#d4d4d4;border-left:1px solid #9c9c9c;border-right:1px solid #a8a8a8;border-top:1px solid #8e8e8e;border-bottom:1px solid #a2a2a2"></div>
<div class="a" style="left:1582px;top:199px;width:311px;height:1.5px;background:#b4b4b4"></div>
<div class="a" style="left:1581px;top:812px;width:2px;height:2px;background:#000"></div>
<div class="a" style="left:1581px;top:169px;width:2px;height:2px;background:#000"></div>
<div class="a" style="left:1892px;top:169px;width:2px;height:2px;background:#000"></div>
<svg class="a" style="left:1586px;top:176px" width="16" height="16"><circle cx="8" cy="8" r="6" fill="#2a2a2a"/><rect x="4.5" y="7.1" width="7" height="1.8" fill="#fff"/></svg>
<div class="t" style="left:1614.9px;top:177.60px;font-size:13px;color:#5e6270;font-weight:normal;">PARALLEL : PARALLEL2</div>

<div class="a" style="left:1582px;top:234px;width:311px;height:1px;background:#b0b0b0"></div>
<div class="a" style="left:1689.5px;top:203.5px;width:36px;height:31.5px;background:#d4d4d4;border:1px solid #c0c0c0;border-bottom:none"></div>
<div class="a" style="left:1616.5px;top:203px;width:1px;height:30px;background:#c0c0c0"></div>
<div class="a" style="left:1653px;top:203px;width:1px;height:30px;background:#c0c0c0"></div>
<div class="a" style="left:1762px;top:203px;width:1px;height:30px;background:#c0c0c0"></div>
<!--TABICONS-->
<svg class="a" style="left:1594px;top:247px" width="14" height="12"><path d="M0.5,1 L11.5,1 L6,10 Z" fill="#333"/></svg>
<div class="t" style="left:1613.1px;top:245.85px;font-size:14px;color:#555;font-weight:bold;letter-spacing:0.3px">Passes</div>

<div class="t" style="left:1595px;top:278.77px;font-size:13.5px;color:#5a5a5a;font-weight:normal;">Tolerance</div>

<div class="t" style="left:1595px;top:311.27px;font-size:13.5px;color:#5a5a5a;font-weight:normal;">Machine Steep Areas</div>

<div class="t" style="left:1595px;top:343.77px;font-size:13.5px;color:#5a5a5a;font-weight:normal;">Add Perpendicular Passes</div>

<div class="t" style="left:1595px;top:376.27px;font-size:13.5px;color:#5a5a5a;font-weight:normal;">Simple Ordering</div>

<div class="t" style="left:1595px;top:408.77px;font-size:13.5px;color:#5a5a5a;font-weight:normal;">Pass Direction</div>

<div class="t" style="left:1595px;top:441.27px;font-size:13.5px;color:#5a5a5a;font-weight:normal;">Stepover</div>

<div class="t" style="left:1595px;top:473.77px;font-size:13.5px;color:#5a5a5a;font-weight:normal;">Direction</div>

<div class="t" style="left:1595px;top:506.27px;font-size:13.5px;color:#5a5a5a;font-weight:normal;">Axial Offset Passes</div>

<div class="t" style="left:1595px;top:538.77px;font-size:13.5px;color:#5a5a5a;font-weight:normal;">Up/Down Milling</div>

<div class="a" style="left:1777px;top:274px;width:82px;height:21px;background:#fff;border:1px solid #8c8c8c"></div>
<div class="a" style="left:1859px;top:274px;width:18px;height:21px;background:linear-gradient(#e6e6e6,#d8d8d8);border:1px solid #a0a0a0;border-left:none"></div>
<svg class="a" style="left:1862px;top:276px" width="12" height="18"><path d="M2.5,5.5 L7.5,5.5 L5,2 Z M2.5,12.5 L7.5,12.5 L5,16 Z" fill="#222"/><rect x="0" y="8.5" width="12" height="1" fill="#eeeeee"/></svg>
<div class="t" style="left:1783px;top:277.80px;font-size:13px;color:#333;font-weight:normal;">0,01 mm</div>

<div class="a" style="left:1777px;top:404.5px;width:82px;height:21px;background:#fff;border:1px solid #8c8c8c"></div>
<div class="a" style="left:1859px;top:404.5px;width:18px;height:21px;background:linear-gradient(#e6e6e6,#d8d8d8);border:1px solid #a0a0a0;border-left:none"></div>
<svg class="a" style="left:1862px;top:406.5px" width="12" height="18"><path d="M2.5,5.5 L7.5,5.5 L5,2 Z M2.5,12.5 L7.5,12.5 L5,16 Z" fill="#222"/><rect x="0" y="8.5" width="12" height="1" fill="#eeeeee"/></svg>
<div class="t" style="left:1783px;top:408.30px;font-size:13px;color:#333;font-weight:normal;">0 deg</div>

<div class="a" style="left:1777px;top:437px;width:82px;height:21px;background:#fff;border:1px solid #8c8c8c"></div>
<div class="a" style="left:1859px;top:437px;width:18px;height:21px;background:linear-gradient(#e6e6e6,#d8d8d8);border:1px solid #a0a0a0;border-left:none"></div>
<svg class="a" style="left:1862px;top:439px" width="12" height="18"><path d="M2.5,5.5 L7.5,5.5 L5,2 Z M2.5,12.5 L7.5,12.5 L5,16 Z" fill="#222"/><rect x="0" y="8.5" width="12" height="1" fill="#eeeeee"/></svg>
<div class="t" style="left:1783px;top:440.80px;font-size:13px;color:#333;font-weight:normal;">0,5 mm</div>

<div class="a" style="left:1778px;top:310.1px;width:16px;height:16px;border:1.2px solid #6e6e6e;border-radius:3.5px;background:linear-gradient(#f6f6f6,#d4d4d4)"></div>
<div class="a" style="left:1778px;top:342.6px;width:16px;height:16px;border:1.2px solid #6e6e6e;border-radius:3.5px;background:linear-gradient(#f6f6f6,#d4d4d4)"></div>
<div class="a" style="left:1778px;top:375.1px;width:16px;height:16px;border:1.2px solid #6e6e6e;border-radius:3.5px;background:linear-gradient(#f6f6f6,#d4d4d4)"></div>
<div class="a" style="left:1778px;top:505.1px;width:16px;height:16px;border:1.2px solid #6e6e6e;border-radius:3.5px;background:linear-gradient(#f6f6f6,#d4d4d4)"></div>
<div class="a" style="left:1775px;top:466.3px;width:101px;height:28px;background:#c8c8c8"></div>
<div class="t" style="left:1781px;top:473.87px;font-size:13.5px;color:#555;font-weight:normal;">Both ways</div>

<svg class="a" style="left:1861px;top:477.3px" width="9" height="7"><path d="M0.5,0.5 L7.5,0.5 L4,5 Z" fill="#222"/></svg>
<div class="a" style="left:1775px;top:531.3px;width:101px;height:28px;background:#c8c8c8"></div>
<div class="t" style="left:1781px;top:538.87px;font-size:13.5px;color:#555;font-weight:normal;">Don't care</div>

<svg class="a" style="left:1861px;top:542.3px" width="9" height="7"><path d="M0.5,0.5 L7.5,0.5 L4,5 Z" fill="#222"/></svg>
<div class="a" style="left:1584px;top:567.8px;width:292px;height:2px;background:#bdbdbd"></div>
<div class="a" style="left:1584px;top:569.8px;width:292px;height:1px;background:#e0e0e0"></div>
<div class="a" style="left:1595px;top:581.3px;width:17px;height:17px;border:1.2px solid #6e6e6e;border-radius:3.5px;background:linear-gradient(#f6f6f6,#d4d4d4)"></div>
<div class="t" style="left:1620.5px;top:583.25px;font-size:14px;color:#555;font-weight:bold;">Stock to Leave</div>

<div class="a" style="left:1584px;top:612.8px;width:292px;height:2px;background:#bdbdbd"></div>
<div class="a" style="left:1584px;top:614.8px;width:292px;height:1px;background:#e0e0e0"></div>
<div class="a" style="left:1595px;top:626.3px;width:17px;height:17px;border:1.2px solid #6e6e6e;border-radius:3.5px;background:linear-gradient(#f6f6f6,#d4d4d4)"></div>
<div class="t" style="left:1620.5px;top:628.25px;font-size:14px;color:#555;font-weight:bold;">Fillets</div>

<div class="a" style="left:1584px;top:658.0px;width:292px;height:2px;background:#bdbdbd"></div>
<div class="a" style="left:1584px;top:660.0px;width:292px;height:1px;background:#e0e0e0"></div>
<div class="a" style="left:1595px;top:671.5px;width:17px;height:17px;border:1.2px solid #6e6e6e;border-radius:3.5px;background:linear-gradient(#f6f6f6,#d4d4d4)"></div>
<div class="t" style="left:1620.5px;top:673.45px;font-size:14px;color:#555;font-weight:bold;">Smoothing</div>

<div class="a" style="left:1584px;top:703.0px;width:292px;height:2px;background:#bdbdbd"></div>
<div class="a" style="left:1584px;top:705.0px;width:292px;height:1px;background:#e0e0e0"></div>
<div class="a" style="left:1595px;top:716.5px;width:17px;height:17px;border:1.2px solid #6e6e6e;border-radius:3.5px;background:linear-gradient(#f6f6f6,#d4d4d4)"></div>
<div class="t" style="left:1620.5px;top:718.45px;font-size:14px;color:#555;font-weight:bold;">Feed Optimization</div>

<div class="a" style="left:1582px;top:767px;width:311px;height:1px;background:#b4b4b4"></div>
<svg class="a" style="left:1597px;top:781px" width="18" height="18"><circle cx="9" cy="9" r="8" fill="#111"/><rect x="7.8" y="7.5" width="2.6" height="6" fill="#fff"/><rect x="6.8" y="7.5" width="3" height="1.3" fill="#fff"/><rect x="6.8" y="12.3" width="4.6" height="1.3" fill="#fff"/><circle cx="9.1" cy="5" r="1.4" fill="#fff"/></svg>
<div class="a" style="left:1710px;top:778.5px;width:75px;height:23px;background:#e6e6e6;border:1px solid #bcbcbc"></div>
<div class="a" style="left:1797.5px;top:778.5px;width:75px;height:23px;background:#e6e6e6;border:1px solid #bcbcbc"></div>
<div class="t" style="left:1737px;top:782.73px;font-size:14.5px;color:#555;font-weight:normal;">OK</div>

<div class="t" style="left:1811px;top:782.73px;font-size:14.5px;color:#555;font-weight:normal;">Cancel</div>

<div class="a" style="left:826px;top:995px;width:182px;height:30px;background:#c6c6c6"></div>
<div class="a" style="left:1016px;top:995px;width:78px;height:30px;background:#c6c6c6"></div>
<svg class="a" style="left:0;top:0" width="400" height="460" viewBox="0 0 400 460">
<defs>
 <radialGradient id="bulb" cx="0.4" cy="0.35" r="0.6"><stop offset="0" stop-color="#fffbd0"/><stop offset="0.6" stop-color="#f4e048"/><stop offset="1" stop-color="#c8a810"/></radialGradient>
 <linearGradient id="tw" x1="0" y1="0" x2="0" y2="1"><stop offset="0" stop-color="#fafafa"/><stop offset="1" stop-color="#d4d6da"/></linearGradient>
</defs>
<!-- bulb row1 -->
<g id="bulb1">
 <circle cx="63.5" cy="226" r="5.8" fill="url(#bulb)" stroke="#b8a040" stroke-width="0.6"/>
 <rect x="61" y="231" width="5" height="6.5" rx="1" fill="#fff" stroke="#5a6070" stroke-width="1.2"/>
</g>
<use href="#bulb1" x="22.5" y="30"/>
<!-- component icon -->
<g id="comp1" stroke="#333" stroke-width="1" fill="url(#tw)" stroke-linejoin="round">
 <path d="M85.5,222 L88,219 L95,219 L95,238.5 L85.5,238.5 Z"/>
 <path d="M85.5,222 L92.5,222 L95,219 M92.5,222 L92.5,238.5" fill="none"/>
 <path d="M92.5,229.5 L95,226.5 L104.5,226.5 L104.5,236 L102,238.5 L92.5,238.5 Z"/>
 <path d="M92.5,229.5 L102,229.5 L104.5,226.5 M102,229.5 L102,238.5" fill="none"/>
 <path d="M85.5,230 L92.5,230" fill="none" stroke="#999"/>
</g>
<use href="#comp1" x="22.5" y="30"/>
<!-- folder row3 -->
<g stroke="#333" stroke-width="1.1" stroke-linejoin="round">
 <path d="M77,283 L84,283 L85.5,285 L94.5,285 L94.5,297.5 L77,297.5 Z" fill="url(#tw)"/>
 <path d="M77,286.5 L94.5,286.5" fill="none"/>
</g>
<!-- units doc -->
<g stroke="#333" stroke-width="1" stroke-linejoin="round">
 <path d="M77.5,309.5 L87.5,309.5 L92.5,314.5 L92.5,325 L77.5,325 Z" fill="url(#tw)"/>
 <path d="M87.5,309.5 L87.5,314.5 L92.5,314.5" fill="none"/>
 <rect x="76.5" y="324" width="17.5" height="4.5" rx="1" fill="#f0b020" stroke="#a86a10"/>
</g>
<!-- setups folder icons -->
<g id="setf" stroke="#333" stroke-width="1" stroke-linejoin="round">
 <path d="M76,343 L89,343 L89,352 L76,356.5 Z" fill="url(#tw)"/>
 <path d="M81,351.5 L96,349 L90.5,356.5 L76,356.5 Z" fill="#c8ccd2"/>
 <path d="M81,346 L86,342 L91,345 L89,351 L83,351 Z" fill="#fff" stroke-width="0.7"/>
 <path d="M81,348 L84,351 L89,351" fill="none" stroke="#4a90e0" stroke-width="1.3"/>
</g>
<use href="#setf" x="22.8" y="30"/>
<!-- adaptive icon -->
<g stroke="#333" stroke-width="1.1" stroke-linejoin="round">
 <path d="M124,401 L140.5,400 L140.5,413 L137,418.5 L121.5,418.5 L121.5,405 Z" fill="url(#tw)"/>
 <path d="M124,408 C130,404 134,404 140,404 M122.5,412 C130,406 134,408 140,407 M125,413 C132,410 135,411 140,410" fill="none" stroke="#1f4f8f" stroke-width="1.4"/>
 <path d="M124,406 L140,404 L140,410 L124,413 Z" fill="#8cc0ee" stroke="none" opacity="0.6"/>
</g>
<!-- parallel icon -->
<g stroke-linejoin="round">
 <path d="M157,430.5 L172,429.5 L172,442 L167,448 L153,448 Z" fill="#c6c9cf" stroke="#555" stroke-width="0.9"/>
 <path d="M153.5,447 C156,438 157,433 160,431 M157.5,447 C160,438 161,433 164,431 M161.5,447 C164,438 165,433 168,431" fill="none" stroke="#2a5a9a" stroke-width="1.5"/>
 <path d="M155.5,447 C158,438 159,433 162,431 M159.5,447 C162,438 163,433 166,431" fill="none" stroke="#9cc8f0" stroke-width="1.3"/>
</g>
</svg>
<!-- panel tab icons -->
<svg class="a" style="left:1585px;top:205px" width="180" height="30" viewBox="1585 205 180 30">
<defs>
 <linearGradient id="pd" x1="0" y1="0" x2="1" y2="0"><stop offset="0" stop-color="#444"/><stop offset="0.5" stop-color="#f0f0f0"/><stop offset="1" stop-color="#555"/></linearGradient>
 <linearGradient id="pw" x1="0" y1="0" x2="0" y2="1"><stop offset="0" stop-color="#fafafa"/><stop offset="1" stop-color="#cfd3d8"/></linearGradient>
</defs>
<ellipse cx="1600" cy="213.5" rx="6.5" ry="3.8" fill="#f4f4f4" stroke="#888" stroke-width="0.8"/>
<path d="M1595,216 L1605,216 L1603.5,220 L1603.5,228 C1603,230 1597,230 1596.5,228 L1596.5,220 Z" fill="url(#pd)" stroke="#444" stroke-width="0.9"/>
<path d="M1596.5,226 L1603.5,219" stroke="#222" stroke-width="1.6"/>
<g stroke="#333" stroke-width="1.1" stroke-linejoin="round">
 <path d="M1625,219 L1629,214.5 L1641,214.5 L1641,224 L1636.5,228.5 L1625,228.5 Z" fill="url(#pw)"/>
 <path d="M1625,219 L1636.5,219 L1641,214.5 M1636.5,219 L1636.5,228.5" fill="none"/>
 <path d="M1632,213 L1636,209 L1644,209 L1644,219 L1640,222 L1640,215 L1632,215 Z" fill="#7ab6e8" stroke="#2a5a9a"/>
</g>
<g stroke="#333" stroke-width="1.1" stroke-linejoin="round">
 <path d="M1661,219 L1665,214.5 L1680,214.5 L1680,224 L1675.5,228.5 L1661,228.5 Z" fill="url(#pw)"/>
 <path d="M1661,219 L1675.5,219 L1680,214.5 M1675.5,219 L1675.5,228.5" fill="none"/>
 <path d="M1661.5,216.5 L1666.5,209.5 L1680.5,209.5 L1675.5,216.5 Z" fill="#f2a020" stroke="none"/>
</g>
<g>
 <path d="M1698,209.5 L1698,228.5 L1716.5,228.5 L1716.5,209.5 M1701.5,209.5 L1701.5,225 L1713,225 L1713,209.5" fill="none" stroke="#444" stroke-width="1.5"/>
 <rect x="1702" y="214" width="10.5" height="2.2" fill="#4a90e0"/><rect x="1702" y="217" width="10.5" height="3" fill="#b8bcc4"/><rect x="1702" y="220.5" width="10.5" height="2.2" fill="#4a90e0"/>
</g>
<g>
 <path d="M1734.5,210 L1753,210 L1753,218 L1734.5,218 Z" fill="none" stroke="#f4e000" stroke-width="1.8"/>
 <path d="M1734.5,218 L1753,218" stroke="#30b030" stroke-width="1.8"/>
 <path d="M1741.5,216 L1746,216 L1746,221 L1753,221 L1753,228.5 L1734.5,228.5 L1734.5,221 L1741.5,221 Z" fill="#e8eaee" stroke="#444" stroke-width="1.3"/>
</g>
</svg>
<!-- nav bar icons -->
<svg class="a" style="left:820px;top:995px" width="280" height="30" viewBox="820 995 280 30">
<g stroke="#333" stroke-width="1">
 <path d="M831,1011 C831,1006.5 849.5,1006.5 849.5,1010.5" fill="none" stroke="#333" stroke-width="1.3"/>
 <path d="M839,1019.5 L839,1005 L836.5,1005 L840.4,1000.3 L844.3,1005 L841.8,1005 L841.8,1019.5 Z" fill="#f4f4f4" stroke="#333" stroke-width="0.9"/>
 <path d="M849.5,1010.5 C849.5,1014 843,1014.5 836,1014.2" fill="none" stroke="#222" stroke-width="1.5"/>
 <path d="M836.5,1011.5 L832.5,1014.2 L836.5,1017 Z" fill="#111" stroke="none"/>
 <path d="M856.5,1007.5 L863.5,1007.5 L860,1012.5 Z" fill="#222" stroke="none"/>
 <rect x="871.5" y="1005.5" width="19" height="13.5" rx="1.5" fill="#e8e8e8" stroke="#444" stroke-width="1.3"/>
 <rect x="875" y="1009" width="12" height="6" fill="#a8aebb" stroke="#555" stroke-width="0.8"/>
 <path d="M873,1005 L876,1001 L880,1003.5 L884,1001 L888,1003 L888,1005" fill="none" stroke="#555" stroke-width="0.9"/>
 <path d="M906,1013 C904,1010 905,1008 907,1009 L909,1011 L909,1002 C909,1000 911.5,1000 911.5,1002 L911.5,1008 L912,1001 C912,999 914.5,999 914.5,1001 L914.5,1008 L915,1002 C915,1000 917.5,1000 917.5,1002 L917.5,1009 L918,1004 C918,1002 920.5,1002 920.5,1004 L920.5,1013 C920.5,1018 918,1020 913,1020 C909,1020 908,1017 906,1013 Z" fill="#f2f2f2" stroke="#444" stroke-width="1.1"/>
 <circle cx="942.2" cy="1008" r="5.3" fill="#e2f0f0" stroke="#444" stroke-width="1.5"/>
 <path d="M946,1012 L950.5,1017.5" stroke="#333" stroke-width="2.6"/>
 <path d="M950.5,1002.5 L956,1002.5 M953.25,999.5 L953.25,1005 M950.5,1008 L956,1008" stroke="#333" stroke-width="1.2"/>
 <rect x="969" y="1001" width="18.5" height="18.5" fill="none" stroke="#555" stroke-width="1" stroke-dasharray="2,2"/>
 <circle cx="976.9" cy="1007.5" r="6.8" fill="#e2f0f0" stroke="#333" stroke-width="1.6"/>
 <path d="M981.5,1013 L987.5,1019" stroke="#333" stroke-width="2.8"/>
 <path d="M995,1007.5 L1002.5,1007.5 L998.75,1012.5 Z" fill="#222" stroke="none"/>
 <rect x="1020.6" y="1000.6" width="19" height="15" rx="1.8" fill="#f2f2f2" stroke="#333" stroke-width="1.3"/>
 <rect x="1023.2" y="1002.7" width="14" height="10.8" rx="1.8" fill="#a2c0e2" stroke="#4a6a9a" stroke-width="1.1"/>
 <path d="M1026.5,1019.4 L1033.6,1019.4 L1032.6,1015.8 L1027.5,1015.8 Z" fill="#f6f6f6" stroke="#333" stroke-width="0.9"/>
 <path d="M1043.5,1007.5 L1050,1007.5 L1046.75,1012.5 Z" fill="#222" stroke="none"/>
 <rect x="1059.6" y="1000.5" width="19" height="19" rx="1.8" fill="#7e8698" stroke="#333" stroke-width="1.2"/>
 <rect x="1061.10" y="1002.10" width="2.3" height="2.3" fill="#ffffff" stroke="none"/><rect x="1064.82" y="1002.10" width="2.3" height="2.3" fill="#ffffff" stroke="none"/><rect x="1068.54" y="1002.10" width="2.3" height="2.3" fill="#ffffff" stroke="none"/><rect x="1072.26" y="1002.10" width="2.3" height="2.3" fill="#ffffff" stroke="none"/><rect x="1075.98" y="1002.10" width="2.3" height="2.3" fill="#ffffff" stroke="none"/><rect x="1061.10" y="1005.82" width="2.3" height="2.3" fill="#fafafa" stroke="none"/><rect x="1064.82" y="1005.82" width="2.3" height="2.3" fill="#fafafa" stroke="none"/><rect x="1068.54" y="1005.82" width="2.3" height="2.3" fill="#fafafa" stroke="none"/><rect x="1072.26" y="1005.82" width="2.3" height="2.3" fill="#fafafa" stroke="none"/><rect x="1075.98" y="1005.82" width="2.3" height="2.3" fill="#fafafa" stroke="none"/><rect x="1061.10" y="1009.54" width="2.3" height="2.3" fill="#f0f2f6" stroke="none"/><rect x="1064.82" y="1009.54" width="2.3" height="2.3" fill="#f0f2f6" stroke="none"/><rect x="1068.54" y="1009.54" width="2.3" height="2.3" fill="#f0f2f6" stroke="none"/><rect x="1072.26" y="1009.54" width="2.3" height="2.3" fill="#f0f2f6" stroke="none"/><rect x="1075.98" y="1009.54" width="2.3" height="2.3" fill="#f0f2f6" stroke="none"/><rect x="1061.10" y="1013.26" width="2.3" height="2.3" fill="#dfe4ee" stroke="none"/><rect x="1064.82" y="1013.26" width="2.3" height="2.3" fill="#dfe4ee" stroke="none"/><rect x="1068.54" y="1013.26" width="2.3" height="2.3" fill="#dfe4ee" stroke="none"/><rect x="1072.26" y="1013.26" width="2.3" height="2.3" fill="#dfe4ee" stroke="none"/><rect x="1075.98" y="1013.26" width="2.3" height="2.3" fill="#dfe4ee" stroke="none"/><rect x="1061.10" y="1016.98" width="2.3" height="2.3" fill="#cdd6e6" stroke="none"/><rect x="1064.82" y="1016.98" width="2.3" height="2.3" fill="#cdd6e6" stroke="none"/><rect x="1068.54" y="1016.98" width="2.3" height="2.3" fill="#cdd6e6" stroke="none"/><rect x="1072.26" y="1016.98" width="2.3" height="2.3" fill="#cdd6e6" stroke="none"/><rect x="1075.98" y="1016.98" width="2.3" height="2.3" fill="#cdd6e6" stroke="none"/>
 <path d="M1081.5,1007.5 L1088.5,1007.5 L1085,1012.5 Z" fill="#222" stroke="none"/>
</g>
</svg>

</body></html>
